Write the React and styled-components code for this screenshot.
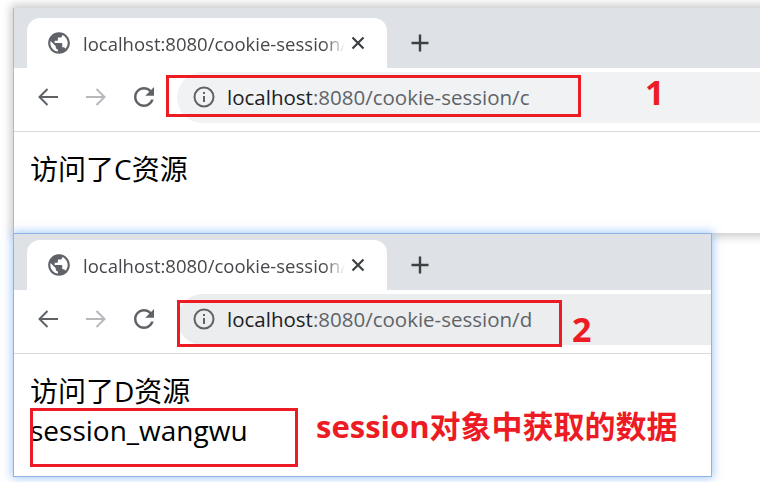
import React from 'react';
import styled, { createGlobalStyle } from 'styled-components';

const GlobalStyle = createGlobalStyle`
  html, body {
    margin: 0;
    padding: 0;
    background: #fff;
    overflow: hidden;
  }
`;

const Desktop = styled.div`
  position: relative;
  width: 760px;
  height: 482px;
  overflow: hidden;
  background: #fff;
  font-family: "Open Sans", "Noto Sans CJK SC", sans-serif;
`;

const Window = styled.div`
  position: absolute;
  left: 14px;
  top: ${(p) => p.$top}px;
  width: ${(p) => p.$width}px;
  height: ${(p) => p.$height}px;
  display: flex;
  flex-direction: column;
  background: #fff;
  box-shadow: ${(p) =>
    p.$active
      ? '0 0 0 1px #8fb4e3, 0 0 9px 2px rgba(120, 175, 245, 0.7)'
      : '-1px 0 0 #b9b9b9, 0 0 9px 3px rgba(0, 0, 0, 0.22)'};
`;

const TabStrip = styled.div`
  height: ${(p) => p.$height}px;
  flex: none;
  display: flex;
  align-items: flex-end;
  padding-left: 13px;
  background: #dee1e6;
`;

const Tab = styled.div`
  width: 360px;
  height: 50px;
  display: flex;
  align-items: center;
  padding: 0 0 0 19px;
  box-sizing: border-box;
  background: #fff;
  border-radius: 13px 13px 0 0;
`;

const TabTitle = styled.div`
  width: 262px;
  margin-left: 11px;
  font-size: 18.5px;
  color: #45474a;
  white-space: nowrap;
  overflow: hidden;
  -webkit-mask-image: linear-gradient(to right, #000 92%, transparent);
  mask-image: linear-gradient(to right, #000 92%, transparent);
`;

const TabClose = styled.svg`
  width: 16px;
  height: 16px;
  margin-left: 5px;
  flex: none;
`;

const NewTab = styled.svg`
  width: 20px;
  height: 20px;
  margin: 0 0 15px 23px;
  flex: none;
`;

const Toolbar = styled.div`
  height: 64px;
  flex: none;
  box-sizing: border-box;
  display: flex;
  align-items: center;
  padding: 0 0 5px 10px;
  border-bottom: 1px solid #d9dadc;
`;

const NavButton = styled.div`
  width: 48px;
  height: 32px;
  display: flex;
  align-items: center;
  justify-content: center;
  flex: none;
`;

const Omnibox = styled.div`
  flex: 1;
  height: 51px;
  margin-left: 9px;
  display: flex;
  align-items: center;
  padding-left: 16px;
  border-radius: 26px 0 0 26px;
  background: ${(p) => (p.$active ? '#ebedef' : '#f0f2f4')};
`;

const UrlHost = styled.span`
  margin-left: 12px;
  font-size: 20.5px;
  color: #202124;
  white-space: nowrap;
`;

const UrlPath = styled.span`
  color: #5f6368;
`;

const Page = styled.div`
  flex: 1;
  padding: ${(p) => p.$top}px 0 0 16px;
  font-size: 28px;
  line-height: 39px;
  color: #000;
`;

const PageLine = styled.div`
  white-space: nowrap;
`;

const Mark = styled.div`
  position: absolute;
  left: ${(p) => p.$x}px;
  top: ${(p) => p.$y}px;
  width: ${(p) => p.$w}px;
  height: ${(p) => p.$h}px;
  box-sizing: border-box;
  border: 3px solid #ed1c24;
`;

const Note = styled.div`
  position: absolute;
  left: ${(p) => p.$x}px;
  top: ${(p) => p.$y}px;
  font-size: ${(p) => p.$size}px;
  line-height: 1;
  font-weight: 700;
  color: #ed1c24;
  white-space: nowrap;
`;

const Globe = () => (
  <svg width="26" height="26" viewBox="0 0 24 24" style={{ flex: 'none' }}>
    <path
      fill="#5f6368"
      d="M12 2C6.48 2 2 6.48 2 12s4.48 10 10 10 10-4.48 10-10S17.52 2 12 2zm-1 17.93c-3.95-.49-7-3.85-7-7.93 0-.62.08-1.21.21-1.79L9 15v1c0 1.1.9 2 2 2v1.93zm6.9-2.54c-.26-.81-1-1.39-1.9-1.39h-1v-3c0-.55-.45-1-1-1H8v-2h2c.55 0 1-.45 1-1V7h2c1.1 0 2-.9 2-2v-.41c2.93 1.19 5 4.06 5 7.41 0 2.08-.8 3.97-2.1 5.39z"
    />
  </svg>
);

const Arrow = ({ color, flip }) => (
  <svg width="22" height="20" viewBox="0 0 22 20" style={flip ? { transform: 'scaleX(-1)' } : undefined}>
    <path d="M21 10H3M10.5 2L2.5 10l8 8" fill="none" stroke={color} strokeWidth="2" />
  </svg>
);

const Reload = () => (
  <svg width="30" height="30" viewBox="0 0 24 24">
    <path
      fill="#5f6368"
      d="M17.65 6.35C16.2 4.9 14.21 4 12 4c-4.42 0-7.99 3.58-7.99 8s3.57 8 7.99 8c3.73 0 6.84-2.55 7.73-6h-2.08c-.82 2.33-3.04 4-5.65 4-3.31 0-6-2.69-6-6s2.69-6 6-6c1.66 0 3.14.69 4.22 1.78L13 11h7V4l-2.35 2.35z"
    />
  </svg>
);

const InfoIcon = () => (
  <svg width="22" height="22" viewBox="0 0 22 22" style={{ flex: 'none' }}>
    <circle cx="11" cy="11" r="9.5" fill="none" stroke="#5f6368" strokeWidth="2" />
    <path d="M11 10v6M11 6v2" stroke="#5f6368" strokeWidth="2" fill="none" />
  </svg>
);

const Browser = ({ top, width, height, stripHeight, active, path, lines, pageTop }) => (
  <Window $top={top} $width={width} $height={height} $active={active}>
    <TabStrip $height={stripHeight}>
      <Tab>
        <Globe />
        <TabTitle>localhost:8080/cookie-session/{path}</TabTitle>
        <TabClose viewBox="0 0 16 16">
          <path d="M2.5 2.5l11 11M13.5 2.5l-11 11" stroke="#3c4043" strokeWidth="2.2" fill="none" />
        </TabClose>
      </Tab>
      <NewTab viewBox="0 0 20 20">
        <path d="M10 1.5v17M1.5 10h17" stroke="#3c4043" strokeWidth="2.4" fill="none" />
      </NewTab>
    </TabStrip>
    <Toolbar>
      <NavButton><Arrow color="#5f6368" /></NavButton>
      <NavButton><Arrow color="#b6b8bb" flip /></NavButton>
      <NavButton><Reload /></NavButton>
      <Omnibox $active={active}>
        <InfoIcon />
        <UrlHost>
          localhost<UrlPath>:8080/cookie-session/{path}</UrlPath>
        </UrlHost>
      </Omnibox>
    </Toolbar>
    <Page $top={pageTop}>
      {lines.map((line) => (
        <PageLine key={line}>{line}</PageLine>
      ))}
    </Page>
  </Window>
);

export default function App() {
  return (
    <Desktop>
      <GlobalStyle />
      <Browser
        top={8}
        width={760}
        height={225}
        stripHeight={60}
        path="c"
        lines={['访问了C资源']}
        pageTop={18}
      />
      <Browser
        top={234}
        width={697}
        height={242}
        stripHeight={56}
        active
        path="d"
        lines={['访问了D资源', 'session_wangwu']}
        pageTop={18}
      />
      <Mark $x={166} $y={75} $w={415} $h={42} />
      <Mark $x={177} $y={300} $w={385} $h={47} />
      <Mark $x={30} $y={408} $w={268} $h={59} />
      <Note $x={645} $y={75} $size={34}>1</Note>
      <Note $x={572} $y={312} $size={34}>2</Note>
      <Note $x={316} $y={411} $size={31}>session对象中获取的数据</Note>
    </Desktop>
  );
}
